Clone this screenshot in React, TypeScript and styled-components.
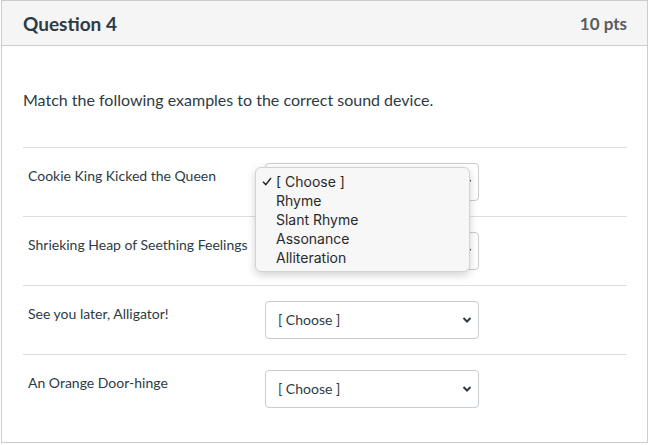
import React from "react";
import styled, { createGlobalStyle } from "styled-components";

const Global = createGlobalStyle`
  html, body { margin: 0; padding: 0; background: #ffffff; }
  body { font-family: Lato, "Open Sans", sans-serif; color: #2d3b45; }
`;

const Card = styled.div`
  margin: 0 1px;
  height: 443px;
  box-sizing: border-box;
  border: 1px solid #c7cdd1;
  background: #fff;
`;

const Header = styled.div`
  height: 45px;
  box-sizing: border-box;
  background: #f5f5f5;
  border-bottom: 1px solid #c7cdd1;
  display: flex;
  align-items: center;
  justify-content: space-between;
  padding: 0 20px 0 21px;
`;

const Title = styled.h2`
  margin: 0;
  font-size: 19px;
  font-weight: 700;
  color: #2d3b45;
`;

const Points = styled.div`
  font-size: 17px;
  font-weight: 700;
  color: #585c60;
`;

const Body = styled.div`
  padding: 42px 20px 0 21px;
`;

const Prompt = styled.p`
  margin: 0 0 35px;
  font-size: 16px;
  line-height: 24px;
`;

const Row = styled.div`
  border-top: 1px solid #dcdfe2;
  padding: 15px 0 15px;
  display: flex;
  align-items: flex-start;
`;

const Label = styled.div`
  width: 242px;
  box-sizing: border-box;
  padding: 3px 0 0 5px;
  font-size: 14px;
  line-height: 20px;
  color: #2d3b45;
`;

const SelectWrap = styled.div`
  position: relative;
  width: 214px;
  height: 38px;
`;

const Select = styled.div`
  width: 100%;
  height: 100%;
  box-sizing: border-box;
  border: 1px solid #c7cdd1;
  border-radius: 4px;
  background: #fff;
  display: flex;
  align-items: center;
  justify-content: space-between;
  padding: 0 6px 1px 12px;
  font-size: 14px;
  color: #2d3b45;
`;

const Chevron = () => (
  <svg width="10" height="8" viewBox="0 0 10 8" aria-hidden>
    <path d="M1.5 2 L5 5.5 L8.5 2" fill="none" stroke="#2d3b45" strokeWidth="2" />
  </svg>
);

const Popup = styled.div`
  position: absolute;
  left: -10px;
  top: 4px;
  width: 215px;
  box-sizing: border-box;
  padding: 4px 0 4px;
  background: #f7f7f7;
  border: 1px solid #d3d3d3;
  border-radius: 6px;
  box-shadow: 0 3px 8px rgba(0, 0, 0, 0.18);
  font-family: Inter, "Liberation Sans", sans-serif;
  font-size: 14px;
  color: #2a2a2a;
  z-index: 5;
`;

const Option = styled.div`
  height: 19px;
  line-height: 19px;
  display: flex;
  align-items: center;
  padding-left: 2px;
`;

const CheckSlot = styled.span`
  width: 18px;
  display: inline-flex;
  justify-content: center;
`;

const Check = () => (
  <svg width="10" height="9" viewBox="0 0 10 9" aria-hidden>
    <path d="M1 4.8 L3.8 7.6 L9 1" fill="none" stroke="#222" strokeWidth="1.4" />
  </svg>
);

const options = ["[ Choose ]", "Rhyme", "Slant Rhyme", "Assonance", "Alliteration"];

const items = [
  "Cookie King Kicked the Queen",
  "Shrieking Heap of Seething Feelings",
  "See you later, Alligator!",
  "An Orange Door-hinge",
];

export default function App() {
  return (
    <>
      <Global />
      <Card>
        <Header>
          <Title>Question 4</Title>
          <Points>10 pts</Points>
        </Header>
        <Body>
          <Prompt>Match the following examples to the correct sound device.</Prompt>
          {items.map((it, i) => (
            <Row key={it}>
              <Label>{it}</Label>
              <SelectWrap>
                <Select>
                  <span>[ Choose ]</span>
                  <Chevron />
                </Select>
                {i === 0 && (
                  <Popup>
                    {options.map((o, j) => (
                      <Option key={o}>
                        <CheckSlot>{j === 0 ? <Check /> : null}</CheckSlot>
                        {o}
                      </Option>
                    ))}
                  </Popup>
                )}
              </SelectWrap>
            </Row>
          ))}
        </Body>
      </Card>
    </>
  );
}
